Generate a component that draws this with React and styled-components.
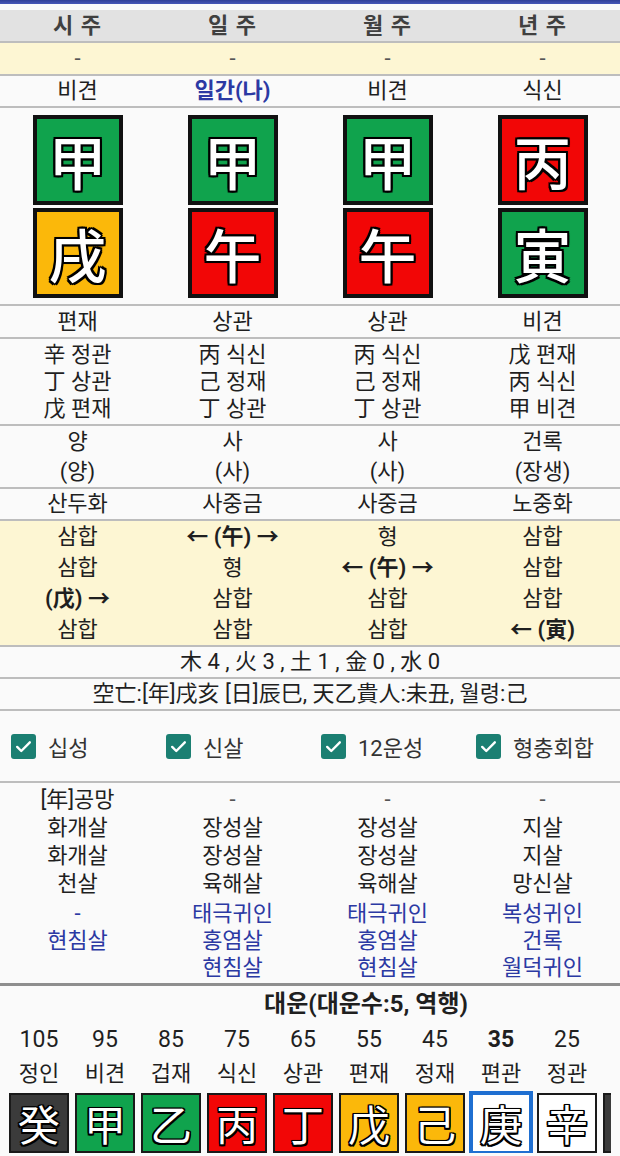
import React from "react";
import styled, { createGlobalStyle } from "styled-components";

const GlobalStyle = createGlobalStyle`
  html, body {
    margin: 0;
    padding: 0;
    background: #fafafa;
  }
  body {
    font-family: Roboto, "Noto Sans CJK KR", sans-serif;
    color: #1f1f1f;
  }
`;

const COLORS = {
  wood: "#10a34d",
  fire: "#f20606",
  earth: "#fbb80a",
  metal: "#ffffff",
  water: "#3b3b3b",
};

const TONES = {
  head: "#e2e2e2",
  note: "#fdf6d3",
  plain: "#fafafa",
};

const outline = (w, blur) =>
  [
    `${-w}px ${-w}px 0 #000`,
    `${w}px ${-w}px 0 #000`,
    `${-w}px ${w}px 0 #000`,
    `${w}px ${w}px 0 #000`,
    `0 ${w}px 0 #000`,
    `0 ${-w}px 0 #000`,
    `${w}px 0 0 #000`,
    `${-w}px 0 0 #000`,
    `0 0 ${blur}px #000`,
  ].join(", ");

const Page = styled.div`
  width: 620px;
  overflow: hidden;
`;

const TopBar = styled.div`
  height: 4px;
  background: linear-gradient(#2f3f96, #4657b8);
  margin-bottom: 6px;
`;

const Row = styled.div`
  display: grid;
  grid-template-columns: repeat(4, 1fr);
  background: ${({ $tone }) => TONES[$tone || "plain"]};
  border-bottom: 2px solid #bdbdbd;
  padding: ${({ $pad }) => $pad || "0"};
`;

const Cell = styled.div`
  display: flex;
  flex-direction: column;
  align-items: center;
  gap: ${({ $gap }) => $gap || 0}px;
  font-size: 22px;
  line-height: ${({ $lh }) => $lh || 30}px;
`;

const Line = styled.div`
  white-space: pre;
  font-weight: ${({ $bold }) => ($bold ? 700 : 400)};
  color: ${({ $blue, $muted }) => ($blue ? "#2b39a3" : $muted ? "#555" : "#1f1f1f")};
`;

const HeadText = styled.div`
  font-weight: 700;
  color: #404040;
  letter-spacing: 1px;
`;

const WideRow = styled.div`
  text-align: center;
  font-size: 22px;
  line-height: 30px;
  background: #fafafa;
  border-bottom: 2px solid #bdbdbd;
  white-space: pre;
`;

const Stack = styled.div`
  display: grid;
  grid-template-columns: repeat(4, 1fr);
  margin-top: ${({ $mt }) => $mt || 0}px;
`;

const BigBox = styled.div`
  width: 90px;
  height: 90px;
  box-sizing: border-box;
  border: 4px solid #111;
  background: ${({ $el }) => COLORS[$el]};
  display: flex;
  align-items: center;
  justify-content: center;
  font-family: "Noto Sans CJK KR", sans-serif;
  font-size: 58px;
  font-weight: 500;
  line-height: 1;
  color: #fff;
  text-shadow: ${outline(2, 3)};
`;

const Checks = styled.div`
  display: grid;
  grid-template-columns: repeat(4, 1fr);
  height: 70px;
  align-items: center;
  border-bottom: 2px solid #bdbdbd;
  background: #fafafa;
`;

const CheckItem = styled.label`
  display: flex;
  align-items: center;
  gap: 12px;
  padding-left: 11px;
  font-size: 22px;
  color: #333;
`;

const CheckBox = styled.span`
  width: 25px;
  height: 25px;
  border-radius: 3px;
  background: #1b7f72;
  display: flex;
  align-items: center;
  justify-content: center;
`;

const Shinsal = styled.div`
  padding: 3px 0 2px;
  border-bottom: 3px solid #8e8e8e;
  background: #fafafa;
`;

const Daeun = styled.div`
  width: 611px;
  overflow: hidden;
`;

const DaeunInner = styled.div`
  width: 732px;
`;

const DaeunTitle = styled.div`
  text-align: center;
  font-size: 24px;
  font-weight: 700;
  line-height: 36px;
`;

const DaeunCols = styled.div`
  display: flex;
  padding-left: 6px;
`;

const DaeunCol = styled.div`
  width: 66px;
  display: flex;
  flex-direction: column;
  align-items: center;
`;

const Age = styled.div`
  font-size: 23px;
  line-height: 36px;
  font-weight: ${({ $now }) => ($now ? 700 : 400)};
`;

const God = styled.div`
  font-size: 22px;
  line-height: 32px;
`;

const SmallBox = styled.div`
  margin-top: 3px;
  width: 60px;
  height: 60px;
  box-sizing: border-box;
  border: 2px solid ${({ $now }) => ($now ? "#1f6fd1" : "#1a1a1a")};
  box-shadow: ${({ $now }) => ($now ? "0 0 0 2px #1f6fd1" : "none")};
  background: ${({ $el }) => COLORS[$el]};
  display: flex;
  align-items: center;
  justify-content: center;
  font-family: "Noto Sans CJK KR", sans-serif;
  font-size: 42px;
  line-height: 1;
  color: #fff;
  text-shadow: ${outline(1.5, 2)};
`;

const pillars = [
  { head: "시 주", god: "비견", stem: ["甲", "wood"], branch: ["戌", "earth"], bgod: "편재",
    hidden: ["辛 정관", "丁 상관", "戊 편재"], un: ["양", "(양)"], nap: "산두화",
    rel: [["삼합"], ["삼합"], ["(戊) →", 1], ["삼합"]],
    sal: ["[年]공망", "화개살", "화개살", "천살"], gui: ["-", "현침살", " "] },
  { head: "일 주", god: "일간(나)", me: true, stem: ["甲", "wood"], branch: ["午", "fire"], bgod: "상관",
    hidden: ["丙 식신", "己 정재", "丁 상관"], un: ["사", "(사)"], nap: "사중금",
    rel: [["← (午) →", 1], ["형"], ["삼합"], ["삼합"]],
    sal: ["-", "장성살", "장성살", "육해살"], gui: ["태극귀인", "홍염살", "현침살"] },
  { head: "월 주", god: "비견", stem: ["甲", "wood"], branch: ["午", "fire"], bgod: "상관",
    hidden: ["丙 식신", "己 정재", "丁 상관"], un: ["사", "(사)"], nap: "사중금",
    rel: [["형"], ["← (午) →", 1], ["삼합"], ["삼합"]],
    sal: ["-", "장성살", "장성살", "육해살"], gui: ["태극귀인", "홍염살", "현침살"] },
  { head: "년 주", god: "식신", stem: ["丙", "fire"], branch: ["寅", "wood"], bgod: "비견",
    hidden: ["戊 편재", "丙 식신", "甲 비견"], un: ["건록", "(장생)"], nap: "노중화",
    rel: [["삼합"], ["삼합"], ["삼합"], ["← (寅)", 1]],
    sal: ["-", "지살", "지살", "망신살"], gui: ["복성귀인", "건록", "월덕귀인"] },
];

const daeun = [
  [105, "정인", "癸", "water"],
  [95, "비견", "甲", "wood"],
  [85, "겁재", "乙", "wood"],
  [75, "식신", "丙", "fire"],
  [65, "상관", "丁", "fire"],
  [55, "편재", "戊", "earth"],
  [45, "정재", "己", "earth"],
  [35, "편관", "庚", "metal"],
  [25, "정관", "辛", "metal"],
  [15, "편인", "壬", "water"],
  [5, "정인", "癸", "water"],
];

const options = ["십성", "신살", "12운성", "형충회합"];

const CheckMark = () => (
  <svg width="19" height="19" viewBox="0 0 24 24" fill="none">
    <path d="M4 12.5l5.2 5.2L20 6.8" stroke="#fff" strokeWidth="3" strokeLinecap="round" strokeLinejoin="round" />
  </svg>
);

const App = () => {
  return (
    <Page>
      <GlobalStyle />
      <TopBar />
      <Row $tone="head">
        {pillars.map((p) => (
          <Cell key={p.head} $lh={31}>
            <HeadText>{p.head}</HeadText>
          </Cell>
        ))}
      </Row>
      <Row $tone="note">
        {pillars.map((p) => (
          <Cell key={p.head} $lh={31}>
            <Line $muted>-</Line>
          </Cell>
        ))}
      </Row>
      <Row>
        {pillars.map((p) => (
          <Cell key={p.head}>
            <Line $bold={p.me} $blue={p.me}>{p.god}</Line>
          </Cell>
        ))}
      </Row>
      <Row $pad="7px 0 6px">
        {pillars.map((p) => (
          <Cell key={p.head} $gap={3}>
            <BigBox $el={p.stem[1]}>{p.stem[0]}</BigBox>
            <BigBox $el={p.branch[1]}>{p.branch[0]}</BigBox>
          </Cell>
        ))}
      </Row>
      <Row>
        {pillars.map((p) => (
          <Cell key={p.head} $lh={31}>
            <Line>{p.bgod}</Line>
          </Cell>
        ))}
      </Row>
      <Row $pad="2px 0">
        {pillars.map((p) => (
          <Cell key={p.head} $lh={27}>
            {p.hidden.map((h) => (
              <Line key={h}>{h}</Line>
            ))}
          </Cell>
        ))}
      </Row>
      <Row $pad="1px 0 0">
        {pillars.map((p) => (
          <Cell key={p.head}>
            {p.un.map((u) => (
              <Line key={u}>{u}</Line>
            ))}
          </Cell>
        ))}
      </Row>
      <Row>
        {pillars.map((p) => (
          <Cell key={p.head}>
            <Line>{p.nap}</Line>
          </Cell>
        ))}
      </Row>
      <Row $tone="note">
        {pillars.map((p) => (
          <Cell key={p.head} $lh={31}>
            {p.rel.map(([t, b], i) => (
              <Line key={i} $bold={b}>{t}</Line>
            ))}
          </Cell>
        ))}
      </Row>
      <WideRow>木 4 , 火 3 , 土 1 , 金 0 , 水 0</WideRow>
      <WideRow>空亡:[年]戌亥 [日]辰巳, 天乙貴人:未丑, 월령:己</WideRow>
      <Checks>
        {options.map((o) => (
          <CheckItem key={o}>
            <CheckBox>
              <CheckMark />
            </CheckBox>
            {o}
          </CheckItem>
        ))}
      </Checks>
      <Shinsal>
        <Stack>
          {pillars.map((p) => (
            <Cell key={p.head} $lh={28}>
              {p.sal.map((s, i) => (
                <Line key={i} $muted={s === "-"}>{s}</Line>
              ))}
            </Cell>
          ))}
        </Stack>
        <Stack $mt={2}>
          {pillars.map((p) => (
            <Cell key={p.head} $lh={27}>
              {p.gui.map((s, i) => (
                <Line key={i} $blue>{s}</Line>
              ))}
            </Cell>
          ))}
        </Stack>
      </Shinsal>
      <Daeun>
        <DaeunInner>
          <DaeunTitle>대운(대운수:5, 역행)</DaeunTitle>
          <DaeunCols>
            {daeun.map(([age, god, ch, el]) => (
              <DaeunCol key={age}>
                <Age $now={age === 35}>{age}</Age>
                <God>{god}</God>
                <SmallBox $el={el} $now={age === 35}>{ch}</SmallBox>
              </DaeunCol>
            ))}
          </DaeunCols>
        </DaeunInner>
      </Daeun>
    </Page>
  );
};

export default App;
